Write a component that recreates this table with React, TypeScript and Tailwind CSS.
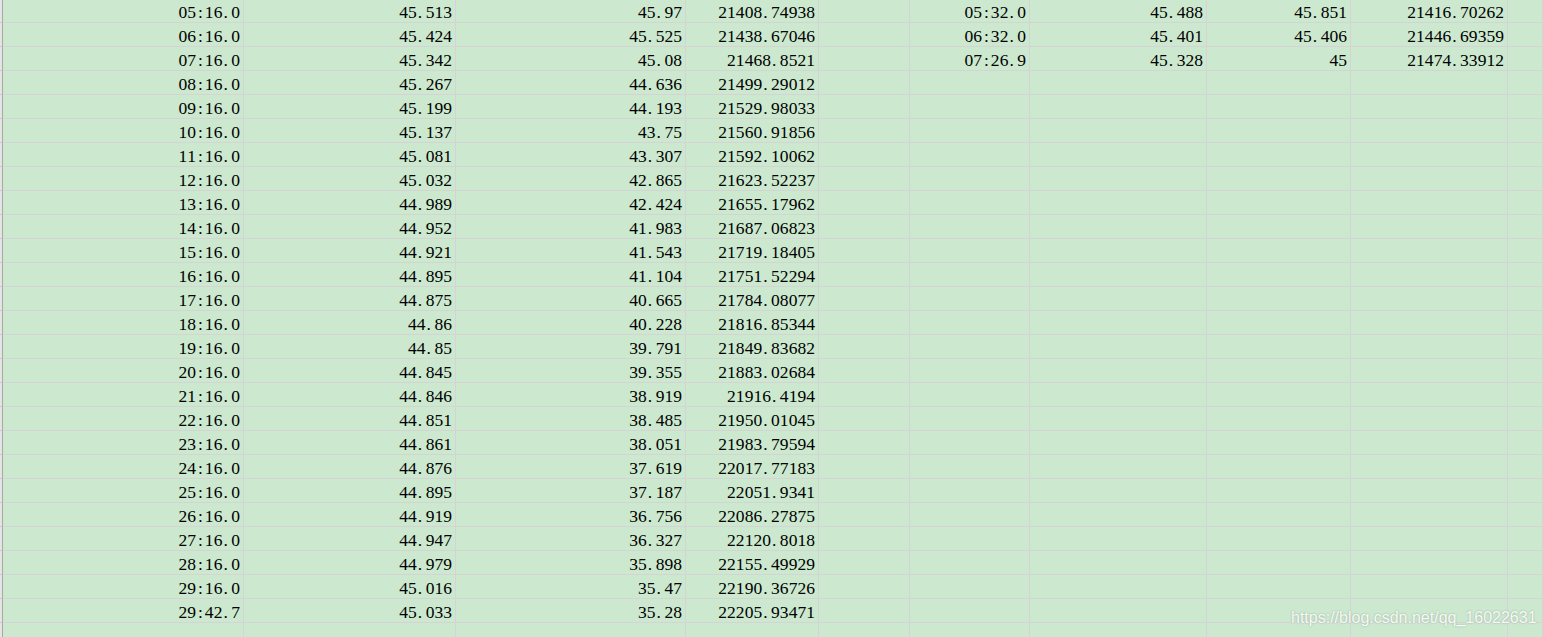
import React from "react";

const colA = ["05:16.0","06:16.0","07:16.0","08:16.0","09:16.0","10:16.0","11:16.0","12:16.0","13:16.0","14:16.0","15:16.0","16:16.0","17:16.0","18:16.0","19:16.0","20:16.0","21:16.0","22:16.0","23:16.0","24:16.0","25:16.0","26:16.0","27:16.0","28:16.0","29:16.0","29:42.7"];
const colB = ["45.513","45.424","45.342","45.267","45.199","45.137","45.081","45.032","44.989","44.952","44.921","44.895","44.875","44.86","44.85","44.845","44.846","44.851","44.861","44.876","44.895","44.919","44.947","44.979","45.016","45.033"];
const colC = ["45.97","45.525","45.08","44.636","44.193","43.75","43.307","42.865","42.424","41.983","41.543","41.104","40.665","40.228","39.791","39.355","38.919","38.485","38.051","37.619","37.187","36.756","36.327","35.898","35.47","35.28"];
const colD = ["21408.74938","21438.67046","21468.8521","21499.29012","21529.98033","21560.91856","21592.10062","21623.52237","21655.17962","21687.06823","21719.18405","21751.52294","21784.08077","21816.85344","21849.83682","21883.02684","21916.4194","21950.01045","21983.79594","22017.77183","22051.9341","22086.27875","22120.8018","22155.49929","22190.36726","22205.93471"];
const second = [
  ["05:32.0", "45.488", "45.851", "21416.70262"],
  ["06:32.0", "45.401", "45.406", "21446.69359"],
  ["07:26.9", "45.328", "45", "21474.33912"],
];

// half-width glyphs, like the SimSun cells of the sheet
const Mono = ({ text }: { text: string }) => (
  <>
    {text.split("").map((ch, i) =>
      ch === "." ? (
        <span key={i} className="inline-block w-[8.8px] pl-[1px] text-left">{ch}</span>
      ) : (
        <span key={i} className="inline-block w-[8.8px] text-center">{ch}</span>
      )
    )}
  </>
);

const Cell = ({ v }: { v?: string }) => (
  <div className="h-[24px] border-r border-b border-[#d6d3d6] pr-[3px] pt-[2px] text-right leading-[22px] whitespace-nowrap overflow-hidden">
    {v ? <Mono text={v} /> : null}
  </div>
);

const Stub = () => <div className="h-[24px] bg-[#e4e4e4] border-r border-b border-r-[#a8a8a8] border-b-[#c8c8c8]" />;

export default function App() {
  const rows = colA.map((a, i) => {
    const s = second[i] || [];
    return [a, colB[i], colC[i], colD[i], "", s[0], s[1], s[2], s[3], ""];
  });
  rows.push(["", "", "", "", "", "", "", "", "", ""]);

  return (
    <div className="relative w-[1543px] h-[637px] overflow-hidden bg-[#cce8cf] text-black font-['Liberation_Serif',serif] text-[17.5px]">
      <div className="-mt-px grid grid-cols-[3px_241px_212px_230px_133px_91px_120px_177px_144px_157px_1fr]">
        {rows.map((r, i) => (
          <React.Fragment key={i}>
            <Stub />
            {r.map((v, j) => <Cell key={j} v={v} />)}
          </React.Fragment>
        ))}
      </div>
      <div className="absolute left-[1291px] top-[610px] font-['Liberation_Sans',Arial,sans-serif] text-[16px] leading-[16px] text-white/90 [text-shadow:0_0_2px_rgba(0,0,0,0.3)] whitespace-nowrap">
        https://blog.csdn.net/qq_16022631
      </div>
    </div>
  );
}
